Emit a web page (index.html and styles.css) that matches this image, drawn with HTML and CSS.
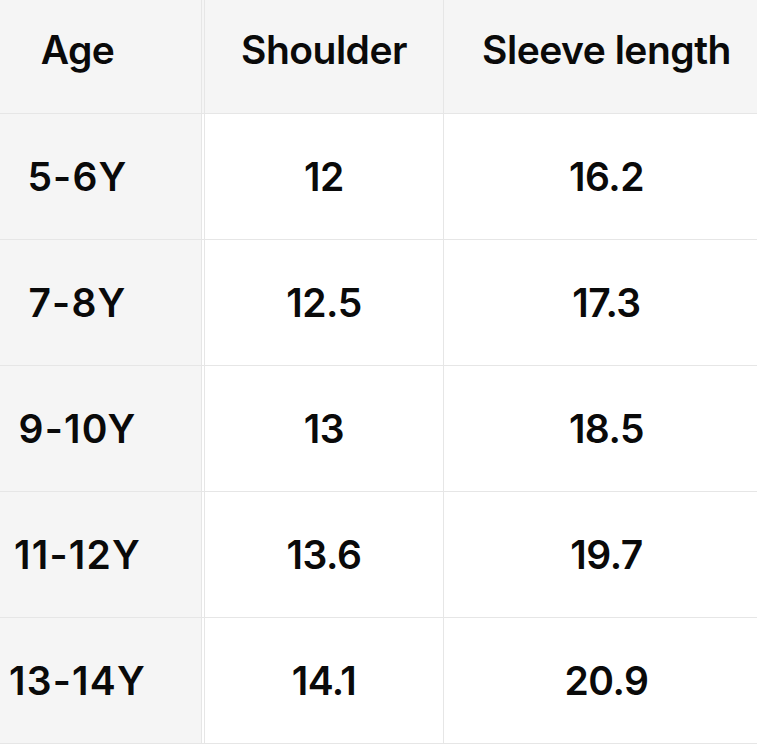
FILE: index.html
```html
<!DOCTYPE html>
<html>
<head>
<meta charset="utf-8">
<link rel="stylesheet" href="styles.css">
</head>
<body>
<div class="table">
  <div class="row head">
    <div class="cell c1">Age</div>
    <div class="cell c2">Shoulder</div>
    <div class="cell c3">Sleeve length</div>
  </div>
  <div class="row">
    <div class="cell c1 age">5-6Y</div>
    <div class="cell c2">12</div>
    <div class="cell c3">16.2</div>
  </div>
  <div class="row">
    <div class="cell c1 age">7-8Y</div>
    <div class="cell c2">12.5</div>
    <div class="cell c3">17.3</div>
  </div>
  <div class="row">
    <div class="cell c1 age">9-10Y</div>
    <div class="cell c2">13</div>
    <div class="cell c3">18.5</div>
  </div>
  <div class="row">
    <div class="cell c1 age">11-12Y</div>
    <div class="cell c2">13.6</div>
    <div class="cell c3">19.7</div>
  </div>
  <div class="row">
    <div class="cell c1 age">13-14Y</div>
    <div class="cell c2">14.1</div>
    <div class="cell c3">20.9</div>
  </div>
</div>
</body>
</html>
```
FILE: styles.css
```css
html, body {
  margin: 0;
  padding: 0;
  background: #ffffff;
  overflow: hidden;
}
.table {
  width: 757px;
  height: 744px;
  display: flex;
  flex-direction: column;
  font-family: "Inter", "Liberation Sans", sans-serif;
  font-weight: 600;
  font-size: 39px;
  letter-spacing: -0.5px;
  color: #0a0a0a;
}
.row {
  display: grid;
  grid-template-columns: 202px 240px 1fr;
  column-gap: 2px;
  height: 126px;
  box-sizing: border-box;
  border-bottom: 1px solid #e6e6e6;
}
.row.head {
  height: 114px;
  background: #f5f5f5;
}
.cell {
  display: flex;
  align-items: center;
  justify-content: center;
  box-sizing: border-box;
  white-space: nowrap;
}
.head .cell {
  padding-bottom: 14px;
}
.c1 {
  background: #f5f5f5;
  border-right: 1px solid #e6e6e6;
  padding-right: 46px;
}
.c1.age {
  letter-spacing: 1.2px;
}
.c2 {
  border-left: 1px solid #e6e6e6;
  border-right: 1px solid #e6e6e6;
}
.c3 {
  padding-left: 10px;
}
```
